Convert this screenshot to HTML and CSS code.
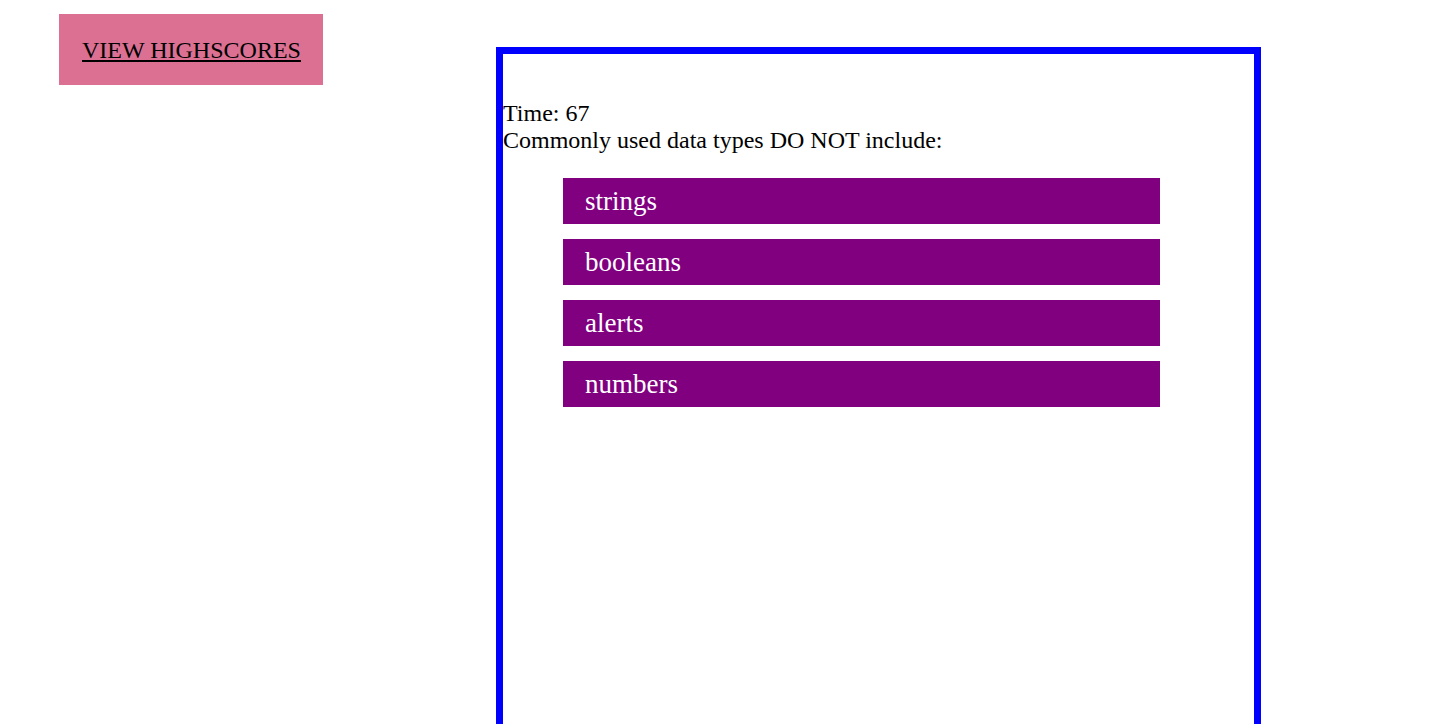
FILE: index.html
```html
<!DOCTYPE html>
<html>
<head>
<meta charset="utf-8">
<link rel="stylesheet" href="styles.css">
</head>
<body>
<div class="page">
  <div class="scores-btn"><a href="#" class="scores-link">VIEW HIGHSCORES</a></div>
  <div class="quiz">
    <div class="timer">Time: 67</div>
    <div class="question">Commonly used data types DO NOT include:</div>
    <div class="choices">
      <div class="choice">strings</div>
      <div class="choice">booleans</div>
      <div class="choice">alerts</div>
      <div class="choice">numbers</div>
    </div>
  </div>
</div>
</body>
</html>
```
FILE: styles.css
```css
html, body {
  margin: 0;
  padding: 0;
  background: #ffffff;
  overflow: hidden;
}
body {
  font-family: "Liberation Serif", "Times New Roman", serif;
  font-size: 24px;
  color: #000000;
}
.page {
  display: flex;
  align-items: flex-start;
  padding-left: 59px;
}
.scores-btn {
  margin-top: 14px;
  width: 264px;
  height: 71px;
  box-sizing: border-box;
  background: #db7093;
  padding-left: 23px;
  padding-top: 2px;
  display: flex;
  align-items: center;
  font-size: 24px;
}
.scores-link {
  color: #000000;
  text-decoration: underline;
}
.quiz {
  margin-top: 47px;
  margin-left: 173px;
  width: 765px;
  height: 760px;
  box-sizing: border-box;
  border: 7px solid #0000ff;
  padding-top: 46px;
}
.timer, .question {
  line-height: 27px;
}
.choices {
  margin-top: 24px;
  margin-left: 60px;
  width: 597px;
  display: flex;
  flex-direction: column;
  gap: 15px;
}
.choice {
  height: 46px;
  line-height: 46px;
  font-size: 27px;
  background: #800080;
  color: #ffffff;
  padding-left: 22px;
}
```
